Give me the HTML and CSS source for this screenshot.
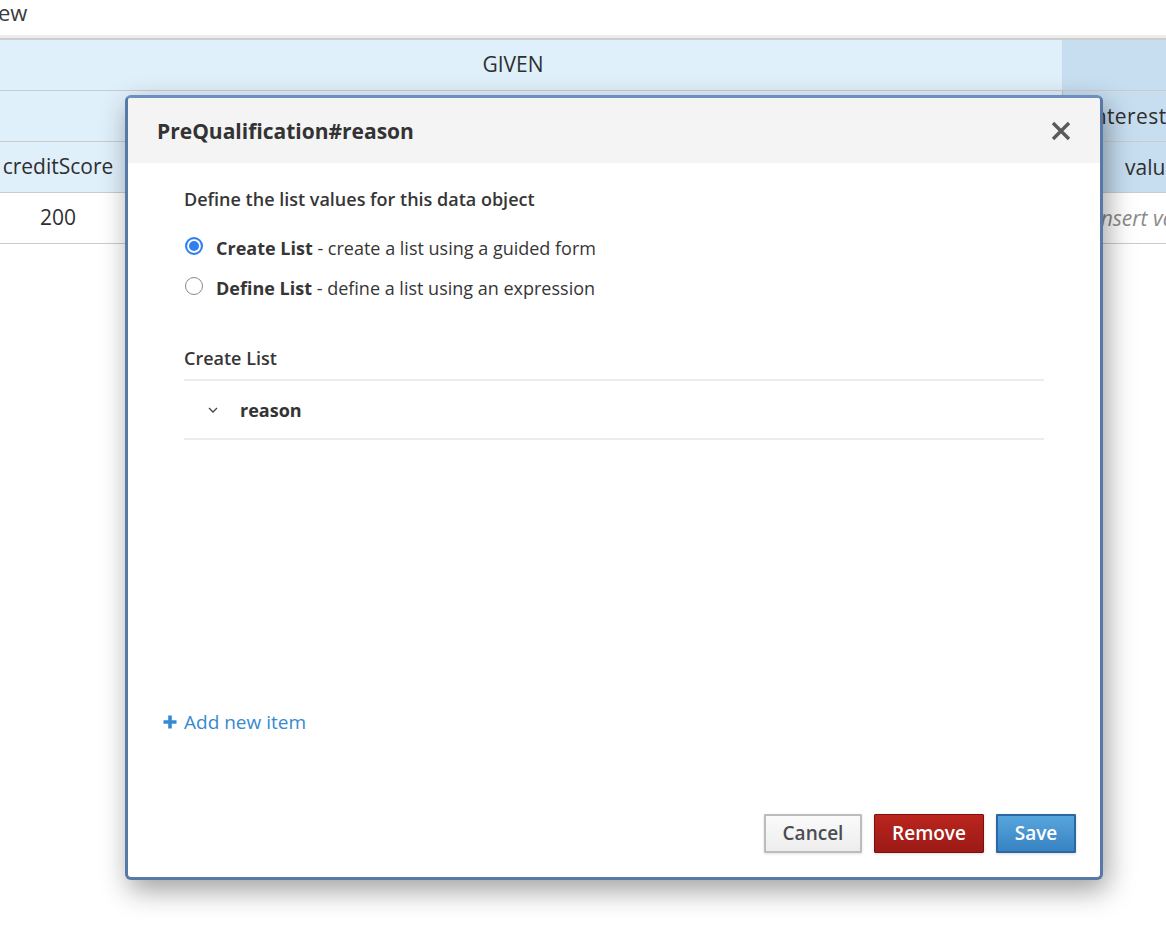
FILE: index.html
```html
<!DOCTYPE html>
<html>
<head>
<meta charset="utf-8">
<link rel="stylesheet" href="styles.css">
</head>
<body>
<div class="page">
  <div class="topbar">ew</div>
  <div class="grid">
    <div class="cell hd span2 given">GIVEN</div>
    <div class="cell hd2 expect"></div>

    <div class="cell hd span2"></div>
    <div class="cell hd2 right r2">interest</div>

    <div class="cell hd colA">creditScore</div>
    <div class="cell hd"></div>
    <div class="cell hd2 right r3">value</div>

    <div class="cell colA">200</div>
    <div class="cell"></div>
    <div class="cell right r4 placeholder">Insert value</div>
  </div>

  <div class="modal">
    <div class="modal-header">
      <h4 class="modal-title">PreQualification#reason</h4>
      <svg class="close" width="22" height="22" viewBox="0 0 22 22"><path d="M3 3 L19 19 M19 3 L3 19" stroke="#5a5a5a" stroke-width="3.4" stroke-linecap="butt"/></svg>
    </div>
    <div class="modal-body">
      <div class="intro">Define the list values for this data object</div>
      <div class="radios">
        <div class="radio-row"><span class="radio checked"></span><span><b>Create List</b> - create a list using a guided form</span></div>
        <div class="radio-row"><span class="radio"></span><span><b>Define List</b> - define a list using an expression</span></div>
      </div>
      <div class="section-title">Create List</div>
      <div class="list-row">
        <svg class="chev" width="10" height="6" viewBox="0 0 10 6"><polyline points="1,1 5,5 9,1" fill="none" stroke="#444" stroke-width="1.3"/></svg>
        <span class="item-name">reason</span>
      </div>
      <div class="spacer"></div>
      <a class="add-link"><svg width="14" height="14" viewBox="0 0 14 14"><path d="M7 0.5 V13.5 M0.5 7 H13.5" stroke="#368ad0" stroke-width="3.6"/></svg><span>Add new item</span></a>
    </div>
    <div class="modal-footer">
      <button class="btn btn-default">Cancel</button>
      <button class="btn btn-danger">Remove</button>
      <button class="btn btn-primary">Save</button>
    </div>
  </div>
</div>
</body>
</html>
```

FILE: styles.css
```css
html, body {
  margin: 0;
  padding: 0;
  background: #ffffff;
  overflow: hidden;
}
body {
  font-family: "Open Sans", "Noto Sans", "Liberation Sans", sans-serif;
  color: #333;
  width: 1166px;
  height: 952px;
}
.page {
  position: relative;
  width: 1166px;
  height: 952px;
  overflow: hidden;
}
.topbar {
  height: 35px;
  font-size: 22px;
  line-height: 24px;
  color: #3a3a3a;
  border-bottom: 3px solid #ececec;
  margin-left: -2px;
}
.grid {
  display: grid;
  grid-template-columns: 116px 946px 260px;
  grid-auto-rows: 51px;
  width: 1322px;
  border-top: 2px solid #cdcdcd;
}
.cell {
  box-sizing: border-box;
  border-bottom: 1px solid #cbcbcb;
  font-size: 21px;
  color: #2f2f2f;
  display: flex;
  align-items: center;
  background: #fff;
  white-space: nowrap;
}
.cell.hd {
  background: #e0f0fb;
}
.cell.hd2 {
  background: #c7def1;
}
.span2 {
  grid-column: span 2;
}
.given {
  justify-content: center;
  padding-right: 36px;
  padding-bottom: 2px;
}
.colA {
  justify-content: center;
  padding-bottom: 2px;
}
.right {
  border-left: 1px solid #bdbdbd;
}
.r2 { padding-left: 25px; letter-spacing: 0.4px; }
.r3 { padding-left: 62px; }
.r4 { padding-left: 32px; }
.placeholder {
  font-style: italic;
  color: #8a8a8a;
}

.modal {
  position: absolute;
  left: 125px;
  top: 95px;
  width: 978px;
  height: 785px;
  box-sizing: border-box;
  border: 3px solid #5679a8;
  border-top-color: #6d8fbf;
  border-radius: 6px;
  background: #fff;
  display: flex;
  flex-direction: column;
  box-shadow: 4px 10px 28px rgba(0,0,0,0.38);
}
.modal-header {
  height: 65px;
  flex: none;
  background: #f4f4f4;
  display: flex;
  align-items: center;
  justify-content: space-between;
  padding: 0 28px 0 29px;
  border-radius: 3px 3px 0 0;
}
.modal-title {
  margin: 0;
  font-size: 21px;
  font-weight: 700;
  color: #333;
}
.close {
  display: block;
}
.modal-body {
  flex: 1;
  display: flex;
  flex-direction: column;
  padding: 23px 56px 0 56px;
  color: #363636;
}
.intro {
  font-size: 18px;
  font-weight: 600;
  line-height: 26px;
}
.radios {
  margin-top: 23px;
  display: flex;
  flex-direction: column;
  gap: 14px;
}
.radio-row {
  display: flex;
  align-items: center;
  gap: 13px;
  font-size: 18px;
  line-height: 26px;
  padding-left: 1px;
}
.radio-row b {
  font-weight: 700;
}
.radio {
  width: 18px;
  height: 18px;
  box-sizing: border-box;
  border-radius: 50%;
  border: 1.5px solid #8a8a8a;
  background: #fff;
  flex: none;
  position: relative;
  top: -2px;
}
.radio.checked {
  border: 2px solid #2f7ff0;
  box-shadow: inset 0 0 0 2px #fff, inset 0 0 0 9px #2f7ff0;
}
.section-title {
  margin-top: 44px;
  font-size: 18px;
  font-weight: 600;
  line-height: 26px;
  padding-bottom: 8px;
  border-bottom: 2px solid #ececec;
}
.list-row {
  height: 57px;
  display: flex;
  align-items: center;
  border-bottom: 2px solid #ececec;
  padding-left: 24px;
}
.chev {
  display: block;
  margin-right: 22px;
}
.item-name {
  font-size: 18px;
  font-weight: 700;
  color: #333;
}
.spacer {
  flex: 1;
}
.add-link {
  display: flex;
  align-items: center;
  gap: 7px;
  margin-left: -21px;
  margin-bottom: 79px;
  color: #368ad0;
  font-size: 19px;
  line-height: 26px;
  cursor: pointer;
}
.add-link svg {
  display: block;
}
.modal-footer {
  flex: none;
  display: flex;
  justify-content: flex-end;
  gap: 12px;
  padding: 0 24px 24px 0;
}
.btn {
  font-family: "Open Sans", "Noto Sans", "Liberation Sans", sans-serif;
  font-size: 19px;
  font-weight: 600;
  height: 39px;
  box-sizing: border-box;
  border-radius: 1px;
  padding: 0 10px 2px;
  cursor: pointer;
}
.btn-default {
  width: 98px;
  color: #4a4d52;
  background: linear-gradient(#fafafa, #ededed);
  border: 2px solid #bcbcbc;
  box-shadow: 0 1px 3px rgba(0,0,0,0.12);
}
.btn-danger {
  width: 110px;
  color: #fff;
  background: linear-gradient(#bb251e, #9b1a16);
  border: 1px solid #7f0f0c;
  box-shadow: 0 1px 3px rgba(0,0,0,0.15);
}
.btn-primary {
  width: 80px;
  color: #fff;
  background: linear-gradient(#57a5dd, #3883c3);
  border: 2px solid #2b68a0;
  box-shadow: 0 1px 3px rgba(0,0,0,0.15);
}
```
